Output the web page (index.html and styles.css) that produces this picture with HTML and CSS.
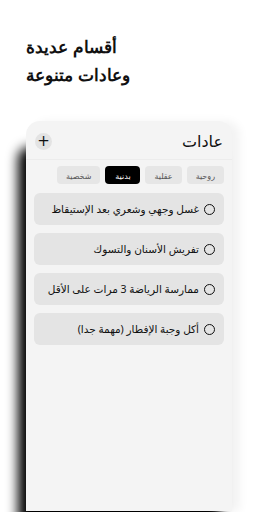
FILE: index.html
```html
<!DOCTYPE html>
<html lang="ar">
<head>
<meta charset="utf-8">
<link rel="stylesheet" href="styles.css">
</head>
<body>
<div class="page">
  <h1 class="headline"><span class="line" dir="rtl">أقسام عديدة</span><span class="line" dir="rtl">وعادات متنوعة</span></h1>
  <div class="card" dir="rtl">
    <div class="card-head">
      <div class="title">عادات</div>
      <div class="add">+</div>
    </div>
    <div class="tabs">
      <div class="tab">روحية</div>
      <div class="tab">عقلية</div>
      <div class="tab active">بدنية</div>
      <div class="tab">شخصية</div>
    </div>
    <div class="list">
      <div class="item"><span class="radio"></span><span>غسل وجهي وشعري بعد الإستيقاظ</span></div>
      <div class="item"><span class="radio"></span><span>تفريش الأسنان والتسوك</span></div>
      <div class="item"><span class="radio"></span><span>ممارسة الرياضة 3 مرات على الأقل</span></div>
      <div class="item"><span class="radio"></span><span>أكل وجبة الإفطار (مهمة جدا)</span></div>
    </div>
  </div>
</div>
</body>
</html>
```
FILE: styles.css
```css
* { box-sizing: border-box; margin: 0; padding: 0; }
html, body { width: 256px; height: 512px; overflow: hidden; background: #fff; }
body { font-family: "Noto Sans", "DejaVu Sans", sans-serif; color: #111; }
.page { padding: 34px 0 0 26px; }
.headline {
  text-align: left;
  font-family: "Liberation Sans", Arial, sans-serif;
  font-size: 17px; font-weight: bold; line-height: 28px; color: #111;
}
.line { display: block; text-align: left; }
.card {
  margin-top: 31px;
  width: 206px; height: 390px;
  background: #f4f4f4;
  border-radius: 14px 14px 0 0;
  box-shadow: -10px 24px 12px -2px #000, 8px 0 10px rgba(0,0,0,0.05);
}
.card-head {
  display: flex; justify-content: space-between; align-items: center;
  padding: 10px 9px 8px 9px;
  border-bottom: 1px solid #ececec;
}
.title { font-size: 16px; line-height: 20px; font-weight: 500; }
.add {
  width: 17px; height: 17px; border-radius: 50%;
  background: #e3e3e3; display: flex; align-items: center; justify-content: center;
  font-size: 15px; line-height: 1; font-family: "DejaVu Sans", sans-serif;
}
.tabs { display: flex; gap: 5px; padding: 6px 8px 0 8px; }
.tab {
  height: 18px; padding: 0 9px; min-width: 35px;
  background: #e6e6e6; border-radius: 4px;
  font-size: 8px; color: #555;
  display: flex; align-items: center; justify-content: center;
}
.tab.active { background: #000; color: #fff; }
.list { display: flex; flex-direction: column; gap: 8px; padding: 9px 8px 0 8px; }
.item {
  height: 32px; background: #e4e4e4; border-radius: 6px;
  display: flex; align-items: center; gap: 5px;
  padding: 0 9px;
  font-size: 10.5px; color: #111; white-space: nowrap;
}
.radio {
  width: 11px; height: 11px; border-radius: 50%;
  border: 1.3px solid #111; flex: none;
}
```
